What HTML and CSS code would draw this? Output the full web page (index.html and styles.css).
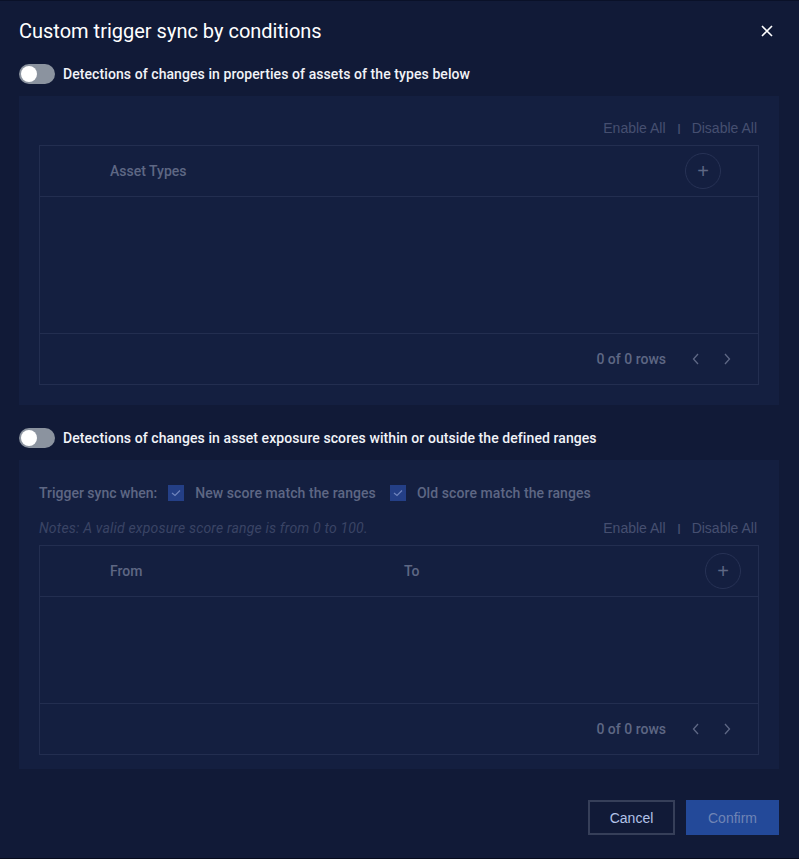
FILE: index.html
```html
<!DOCTYPE html>
<html lang="en">
<head>
    <meta charset="UTF-8">
    <meta name="viewport" content="width=device-width, initial-scale=1.0">
    <title>Custom trigger sync by conditions</title>
    <link rel="stylesheet" href="styles.css">
</head>
<body>
    <div class="modal">
        <div class="modal-header">
            <h1>Custom trigger sync by conditions</h1>
            <button class="close-btn" aria-label="Close">
                <svg width="12" height="12" viewBox="0 0 12 12"><path d="M1 1L11 11M11 1L1 11" stroke="#fff" stroke-width="1.6"/></svg>
            </button>
        </div>

        <div class="toggle-row">
            <span class="switch"><span class="knob"></span></span>
            <span class="toggle-label">Detections of changes in properties of assets of the types below</span>
        </div>

        <div class="section section-assets">
            <div class="actions-row">
                <span class="link">Enable All</span>
                <span class="sep">|</span>
                <span class="link">Disable All</span>
            </div>
            <div class="table">
                <div class="table-head">
                    <span class="col col-asset">Asset Types</span>
                    <span class="add-btn add-asset">+</span>
                </div>
                <div class="table-body body-assets"></div>
                <div class="table-foot">
                    <span class="rows">0 of 0 rows</span>
                    <span class="pager">
                        <svg width="8" height="12" viewBox="0 0 8 12"><path d="M6 1L1.5 6L6 11" fill="none" stroke="#5f6885" stroke-width="1.3"/></svg>
                        <svg width="8" height="12" viewBox="0 0 8 12"><path d="M2 1L6.5 6L2 11" fill="none" stroke="#5f6885" stroke-width="1.3"/></svg>
                    </span>
                </div>
            </div>
        </div>

        <div class="toggle-row toggle-second">
            <span class="switch"><span class="knob"></span></span>
            <span class="toggle-label">Detections of changes in asset exposure scores within or outside the defined ranges</span>
        </div>

        <div class="section section-scores">
            <div class="trigger-row">
                <span class="trigger-label">Trigger sync when:</span>
                <label class="check">
                    <span class="box"><svg width="10" height="8" viewBox="0 0 10 8"><path d="M1 4L4 6.5L9 1.5" fill="none" stroke="#6f84bd" stroke-width="1.2"/></svg></span>
                    New score match the ranges
                </label>
                <label class="check">
                    <span class="box"><svg width="10" height="8" viewBox="0 0 10 8"><path d="M1 4L4 6.5L9 1.5" fill="none" stroke="#6f84bd" stroke-width="1.2"/></svg></span>
                    Old score match the ranges
                </label>
            </div>
            <div class="notes-row">
                <span class="notes">Notes: A valid exposure score range is from 0 to 100.</span>
                <span class="actions-inline">
                    <span class="link">Enable All</span>
                    <span class="sep">|</span>
                    <span class="link">Disable All</span>
                </span>
            </div>
            <div class="table">
                <div class="table-head">
                    <span class="col col-from">From</span>
                    <span class="col col-to">To</span>
                    <span class="add-btn add-range">+</span>
                </div>
                <div class="table-body body-scores"></div>
                <div class="table-foot">
                    <span class="rows">0 of 0 rows</span>
                    <span class="pager">
                        <svg width="8" height="12" viewBox="0 0 8 12"><path d="M6 1L1.5 6L6 11" fill="none" stroke="#5f6885" stroke-width="1.3"/></svg>
                        <svg width="8" height="12" viewBox="0 0 8 12"><path d="M2 1L6.5 6L2 11" fill="none" stroke="#5f6885" stroke-width="1.3"/></svg>
                    </span>
                </div>
            </div>
        </div>

        <div class="modal-footer">
            <button class="btn btn-cancel">Cancel</button>
            <button class="btn btn-confirm">Confirm</button>
        </div>
    </div>
</body>
</html>
```

FILE: styles.css
```css
body {
    margin: 0;
    background-color: #0a1129;
    font-family: Roboto, "Liberation Sans", Arial, sans-serif;
}
.modal {
    box-sizing: border-box;
    height: 859px;
    background-color: #111a37;
    border-top: 1px solid #0a1128;
    border-bottom: 1px solid #070c1d;
    padding: 0 20px 0 19px;
}
.modal-header {
    display: flex;
    align-items: center;
    justify-content: space-between;
    height: 60px;
}
h1 {
    margin: 0;
    color: #fff;
    font-size: 20px;
    font-weight: 400;
}
.close-btn {
    background: none;
    border: none;
    padding: 0;
    margin-right: 5px;
    width: 14px;
    height: 14px;
    display: flex;
    align-items: center;
    justify-content: center;
    cursor: pointer;
}
.toggle-row {
    display: flex;
    align-items: center;
    height: 20px;
    margin-top: 3px;
    margin-bottom: 12px;
}
.toggle-second {
    margin-top: 23px;
}
.switch {
    position: relative;
    display: inline-block;
    width: 36px;
    height: 20px;
    border-radius: 10px;
    background-color: #8b939f;
    margin-right: 8px;
}
.knob {
    position: absolute;
    left: 2px;
    top: 2px;
    width: 16px;
    height: 16px;
    border-radius: 50%;
    background-color: #fff;
}
.toggle-label {
    color: #f1f3f8;
    font-size: 14px;
    font-weight: 500;
    letter-spacing: 0.08px;
}
.section {
    background-color: #141f40;
    padding: 20px 20px 20px 20px;
}
.section-scores {
    padding-bottom: 14px;
}
.actions-row {
    display: flex;
    justify-content: flex-end;
    align-items: center;
    height: 24px;
    margin-bottom: 5px;
    padding-right: 2px;
}
.link {
    font-family: "Liberation Sans", Arial, sans-serif;
    font-size: 14px;
    color: #464f70;
}
.sep {
    color: #464f70;
    font-family: "Liberation Sans", Arial, sans-serif;
    font-size: 11px;
    font-weight: 700;
    margin: 0 11px 0 12px;
}
.table {
    border: 1px solid #232e50;
}
.table-head {
    position: relative;
    display: flex;
    align-items: center;
    height: 50px;
    border-bottom: 1px solid #232e50;
    font-size: 14px;
    font-weight: 500;
    color: #5e6784;
}
.col-asset,
.col-from {
    margin-left: 70px;
}
.col-to {
    position: absolute;
    left: 364px;
}
.add-btn {
    margin-left: auto;
    box-sizing: border-box;
    width: 36px;
    height: 36px;
    border: 1px solid #273255;
    border-radius: 50%;
    display: flex;
    align-items: center;
    justify-content: center;
    color: #5e6784;
    font-family: "Liberation Sans", Arial, sans-serif;
    font-size: 20px;
    font-weight: 400;
}
.add-asset {
    margin-right: 37px;
}
.add-range {
    margin-right: 17px;
}
.body-assets {
    height: 136px;
    border-bottom: 1px solid #232e50;
}
.body-scores {
    height: 106px;
    border-bottom: 1px solid #232e50;
}
.table-foot {
    display: flex;
    justify-content: flex-end;
    align-items: center;
    height: 50px;
    padding-right: 27px;
}
.rows {
    font-size: 14px;
    font-weight: 500;
    color: #5e6784;
}
.pager {
    display: flex;
    gap: 23px;
    margin-left: 26px;
}
.trigger-row {
    display: flex;
    align-items: center;
    height: 26px;
    font-size: 14px;
    font-weight: 500;
    color: #5e6784;
}
.trigger-label {
    margin-right: 11px;
}
.check {
    display: flex;
    align-items: center;
    margin-right: 14px;
    letter-spacing: 0.08px;
}
.box {
    box-sizing: border-box;
    width: 16px;
    height: 16px;
    background-color: #243f86;
    display: flex;
    align-items: center;
    justify-content: center;
    margin-right: 11px;
}
.notes-row {
    display: flex;
    justify-content: space-between;
    align-items: center;
    height: 24px;
    margin-top: 10px;
    margin-bottom: 5px;
    padding-right: 2px;
}
.notes {
    font-size: 14px;
    font-style: italic;
    color: #3a4465;
    letter-spacing: 0.18px;
}
.actions-inline {
    display: flex;
    align-items: center;
}
.modal-footer {
    display: flex;
    justify-content: flex-end;
    gap: 11px;
    margin-top: 31px;
}
.btn {
    font-family: "Liberation Sans", Arial, sans-serif;
    font-size: 14px;
    height: 35px;
    cursor: pointer;
}
.btn-cancel {
    width: 87px;
    background-color: transparent;
    border: 2px solid #363f59;
    color: #b3c3e8;
}
.btn-confirm {
    width: 93px;
    background-color: #234999;
    border: none;
    color: #6f84b5;
}
```
